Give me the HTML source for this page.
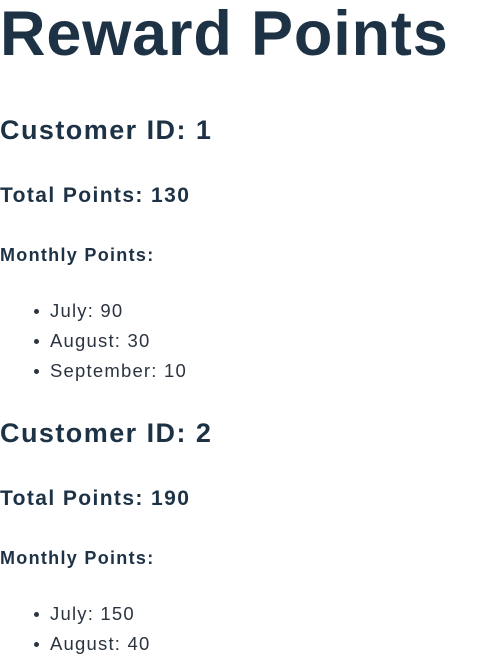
<!DOCTYPE html>
<html><head><meta charset="utf-8"><style>
body{margin:0;width:493px;height:661px;overflow:hidden;background:#fff;font-family:"Liberation Sans",Arial,sans-serif;color:#1e3246;position:relative}
.t{position:absolute;left:0;white-space:nowrap;line-height:1}
.h1,.h2,.h3,.h4{font-weight:bold}
.h1{font-size:63px;top:3px;letter-spacing:0.85px}
.h2{font-size:27px;letter-spacing:1.45px}
.h3{font-size:21px;letter-spacing:1.4px}
.h4{font-size:18px;letter-spacing:1.3px}
.li{font-size:18.5px;color:#2b3440;left:50px;letter-spacing:1.2px}
.b{position:absolute;left:34px;width:5px;height:5px;border-radius:50%;background:#2b3440}
</style></head><body>
<div class="t h1">Reward Points</div>

<div class="t h2" style="top:117px">Customer ID: 1</div>
<div class="t h3" style="top:185px">Total Points: 130</div>
<div class="t h4" style="top:246px">Monthly Points:</div>
<div class="b" style="top:309px"></div><div class="t li" style="top:302px">July: 90</div>
<div class="b" style="top:339px"></div><div class="t li" style="top:332px">August: 30</div>
<div class="b" style="top:369px"></div><div class="t li" style="top:362px">September: 10</div>

<div class="t h2" style="top:420px">Customer ID: 2</div>
<div class="t h3" style="top:488px">Total Points: 190</div>
<div class="t h4" style="top:549px">Monthly Points:</div>
<div class="b" style="top:612px"></div><div class="t li" style="top:605px">July: 150</div>
<div class="b" style="top:642px"></div><div class="t li" style="top:635px">August: 40</div>
</body></html>
